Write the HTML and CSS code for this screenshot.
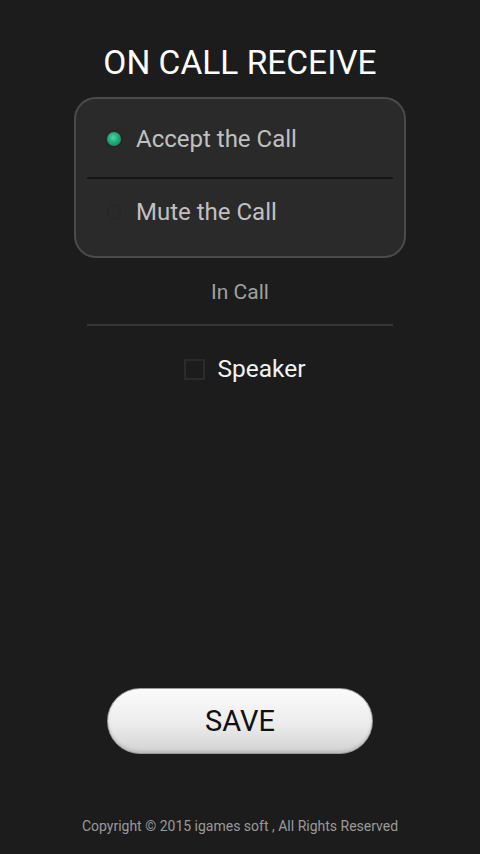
FILE: index.html
```html
<!DOCTYPE html>
<html>
<head>
<meta charset="utf-8">
<link rel="stylesheet" href="styles.css">
</head>
<body>
<div class="page">
  <h1 class="title">ON CALL RECEIVE</h1>
  <div class="card">
    <div class="option">
      <span class="radio radio-on"></span>
      <span class="option-label">Accept the Call</span>
    </div>
    <div class="card-divider"></div>
    <div class="option option-last">
      <span class="radio"></span>
      <span class="option-label">Mute the Call</span>
    </div>
  </div>
  <div class="section">In Call</div>
  <div class="divider"></div>
  <div class="check-row">
    <span class="checkbox"></span>
    <span class="check-label">Speaker</span>
  </div>
  <div class="spacer"></div>
  <button class="save">SAVE</button>
  <div class="copyright">Copyright © 2015 igames soft , All Rights Reserved</div>
</div>
</body>
</html>
```
FILE: styles.css
```css
html, body {
  margin: 0;
  padding: 0;
  background: #1c1c1c;
}
body {
  font-family: Roboto, "Noto Sans", "Liberation Sans", sans-serif;
}
.page {
  height: 854px;
  display: flex;
  flex-direction: column;
  align-items: center;
  padding-top: 43px;
  padding-bottom: 18px;
  box-sizing: border-box;
}
.title {
  margin: 0;
  font-size: 33.5px;
  line-height: 40px;
  font-weight: 400;
  color: #ffffff;
}
.card {
  margin-top: 14px;
  width: 332px;
  height: 161px;
  box-sizing: border-box;
  border: 2px solid #4b4b4b;
  border-radius: 22px;
  background: #2a2a2a;
  padding: 2px 11px 0;
  display: flex;
  flex-direction: column;
}
.option {
  height: 76px;
  display: flex;
  align-items: center;
  padding-left: 20px;
}
.option-last {
  height: 66px;
}
.card-divider {
  height: 2px;
  background: #161616;
  margin: 0;
}
.radio {
  width: 14px;
  height: 14px;
  border-radius: 50%;
  box-sizing: border-box;
  border: 1px solid #252525;
  margin-right: 15px;
  flex: none;
}
.radio-on {
  border: none;
  background: radial-gradient(circle at 45% 40%, #4fd9a5 0%, #1fa979 45%, #0f7a55 100%);
  box-shadow: 0 0 0 2px rgba(60, 20, 30, 0.35);
}
.option-label {
  font-size: 24px;
  line-height: 28px;
  color: #c0c0c0;
}
.section {
  margin-top: 20px;
  font-size: 21px;
  line-height: 28px;
  color: #a0a0a0;
}
.divider {
  margin-top: 18px;
  width: 306px;
  height: 2px;
  background: #353535;
}
.check-row {
  margin-top: 29px;
  height: 28px;
  display: flex;
  align-items: center;
  padding-left: 10px;
}
.checkbox {
  width: 21px;
  height: 21px;
  box-sizing: border-box;
  border: 2px solid #2b2b2b;
  margin-right: 12px;
}
.check-label {
  font-size: 24.5px;
  line-height: 28px;
  color: #f2f2f2;
}
.spacer {
  flex: 1;
}
.save {
  width: 266px;
  height: 66px;
  border-radius: 33px;
  border: 1px solid #9a9a9a;
  background: linear-gradient(#fbfbfb 0%, #ececec 55%, #d2d2d2 100%);
  font-family: Roboto, "Noto Sans", "Liberation Sans", sans-serif;
  font-size: 29px;
  color: #111111;
  padding: 0;
  box-shadow: inset 0 -2px 3px rgba(0,0,0,0.12);
}
.copyright {
  margin-top: 62px;
  font-size: 14px;
  line-height: 20px;
  color: #9a9a9a;
}
```
